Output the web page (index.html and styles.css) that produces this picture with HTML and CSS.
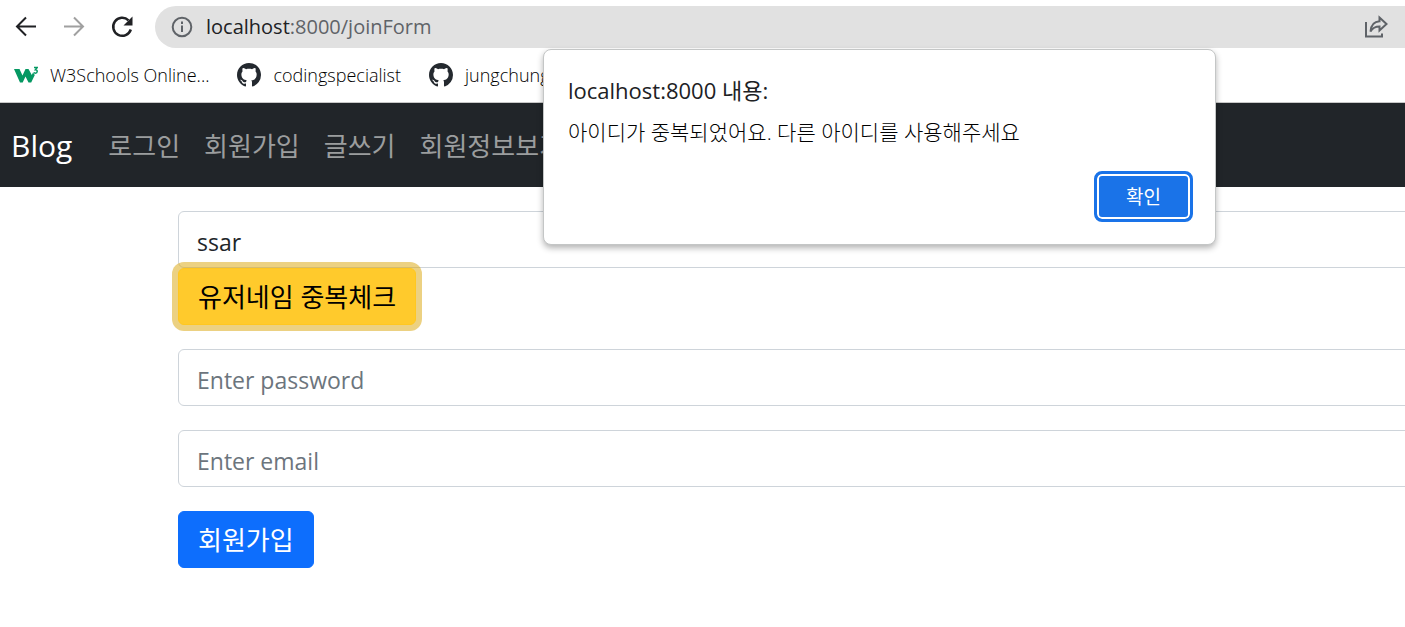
FILE: index.html
```
<!DOCTYPE html>
<html lang="ko">
<head>
<meta charset="utf-8">
<title>Blog</title>
<link rel="stylesheet" href="styles.css">
</head>
<body>
<svg class="sprite" aria-hidden="true">
  <symbol id="github" viewBox="0 0 16 16"><path d="M8 0C3.58 0 0 3.58 0 8c0 3.54 2.29 6.53 5.47 7.59.4.07.55-.17.55-.38 0-.19-.01-.82-.01-1.49-2.01.37-2.53-.49-2.69-.94-.09-.23-.48-.94-.82-1.13-.28-.15-.68-.52-.01-.53.63-.01 1.08.58 1.23.82.72 1.21 1.87.87 2.33.66.07-.52.28-.87.51-1.07-1.78-.2-3.64-.89-3.64-3.95 0-.87.31-1.59.82-2.15-.08-.2-.36-1.02.08-2.12 0 0 .67-.21 2.2.82.64-.18 1.32-.27 2-.27s1.36.09 2 .27c1.53-1.04 2.2-.82 2.2-.82.44 1.1.16 1.92.08 2.12.51.56.82 1.27.82 2.15 0 3.07-1.87 3.75-3.65 3.95.29.25.54.73.54 1.48 0 1.07-.01 1.93-.01 2.2 0 .21.15.46.55.38A8.01 8.01 0 0 0 16 8c0-4.42-3.58-8-8-8z"/></symbol>
</svg>
<div class="toolbar">
  <button class="tool" aria-label="Back"><svg viewBox="0 0 24 24"><path d="M22 11.500H3.500M12 2.500l-9 9 9 9"/></svg></button>
  <button class="tool tool-off" aria-label="Forward"><svg viewBox="0 0 24 24"><path d="M2 11.500h18.500M12 2.500l9 9-9 9"/></svg></button>
  <button class="tool" aria-label="Reload"><svg viewBox="0 0 24 24"><path class="thick" d="M20.800 14.500A9 9 0 1 1 18.500 5.300"/><path class="solid" d="M22.500 1.500v9h-9z"/></svg></button>
  <div class="address">
    <svg class="info" viewBox="0 0 22 22"><circle cx="11" cy="11" r="9.300"/><path d="M11 9.500v6.500M11 5.500v2.500"/></svg>
    <span class="url"><b>localhost</b>:8000/joinForm</span>
    <button class="share" aria-label="Share"><svg viewBox="0 0 24 24"><path d="M2 7v14.500h16v-3"/><path d="M15.500 2.500l7 6.500-7 6.500v-4C11 11.500 8.500 13 6.500 16.500 7 10.500 10 6.500 15.500 6.200z"/></svg></button>
  </div>
</div>
<nav class="bookmarks" aria-label="Bookmarks">
  <a href="#"><svg class="mark" viewBox="0 0 24 24"><path fill="#059862" d="M0 6h5.500l3 6.500 3-6.500h3l3.300 6 1.200-2.500L20.800 12l-3.600 7.500h-2.700L11.500 13.500 8.700 19.500H6z"/><path fill="none" stroke="#059862" stroke-width="1.500" d="M20 4.500h3.200l-1.800 2.300c2.600 0 2.200 3.400 0 3.400-.8 0-1.300-.3-1.600-.8"/></svg>W3Schools Online...</a>
  <a href="#"><svg class="mark cat"><use href="#github"/></svg>codingspecialist</a>
  <a href="#"><svg class="mark cat"><use href="#github"/></svg>jungchung</a>
</nav>
<header class="navbar">
  <a class="brand" href="#">Blog</a>
  <a href="#">로그인</a>
  <a href="#">회원가입</a>
  <a href="#">글쓰기</a>
  <a href="#">회원정보보기</a>
</header>
<main>
  <form class="join">
    <div class="group">
      <input class="field" type="text" value="ssar" aria-label="Username">
      <button class="btn btn-check" type="button">유저네임 중복체크</button>
    </div>
    <input class="field" type="password" placeholder="Enter password" aria-label="Password">
    <input class="field" type="email" placeholder="Enter email" aria-label="Email">
    <button class="btn btn-join" type="button">회원가입</button>
  </form>
</main>
<div class="alert" role="alertdialog" aria-labelledby="alert-title" aria-describedby="alert-text">
  <h1 id="alert-title">localhost:8000 내용:</h1>
  <p id="alert-text">아이디가 중복되었어요. 다른 아이디를 사용해주세요</p>
  <button class="ok" type="button">확인</button>
</div>
</body>
</html>
```
FILE: styles.css
```
* { box-sizing: border-box; }
body {
  margin: 0;
  overflow-x: hidden;
  background: #fff;
  color: #212529;
  font-family: "Open Sans", "Noto Sans CJK KR", sans-serif;
}
button, input { font-family: inherit; }
a { color: inherit; text-decoration: none; white-space: nowrap; }
.sprite { position: absolute; width: 0; height: 0; }

.toolbar { display: flex; align-items: center; padding: 6px 0 0 14px; }
.tool {
  width: 24px;
  height: 24px;
  margin-right: 24px;
  padding: 0;
  border: 0;
  background: none;
  color: #202124;
}
.tool-off { color: #a0a0a0; }
.tool:nth-of-type(3) { margin-right: 21px; }
.tool svg, .share svg { display: block; width: 24px; height: 24px; fill: none; stroke: currentColor; stroke-width: 2; }
.tool .thick { stroke-width: 2.5; }
.tool .solid { fill: currentColor; stroke: none; }
.address {
  flex: 1;
  display: flex;
  align-items: center;
  height: 42px;
  padding: 0 17px 0 16px;
  border-radius: 21px 0 0 21px;
  background: #e1e1e1;
}
.info { width: 22px; height: 22px; margin-right: 13px; fill: none; stroke: #5f6368; stroke-width: 2; }
.url { flex: 1; color: #5f6368; font-size: 20px; line-height: 28px; }
.url b { color: #202124; font-weight: 400; }
.share { padding: 0; border: 0; background: none; color: #5f6368; }

.bookmarks {
  display: flex;
  gap: 28px;
  height: 55px;
  padding: 0 14px;
  border-bottom: 1px solid #c8c8c8;
  color: #000;
  font-size: 18px;
  font-weight: 300;
}
.bookmarks a { display: flex; align-items: center; gap: 12px; }
.mark { width: 24px; height: 24px; flex: none; }
.cat { fill: #24292f; }

.navbar {
  display: flex;
  align-items: center;
  gap: 24px;
  height: 84px;
  padding: 0 11px;
  background: #212529;
  color: #9b9d9e;
  font-size: 26px;
}
.brand { margin-right: 12px; color: #fff; font-size: 30px; }

.join {
  display: flex;
  flex-direction: column;
  align-items: flex-start;
  gap: 24px;
  margin-right: -24px;
  padding: 24px 0 24px 178px;
}
.group { width: 100%; }
.field {
  display: block;
  width: 100%;
  height: 57px;
  padding: 4px 18px 0;
  border: 1px solid #ced4da;
  border-radius: 6px;
  background: #fff;
  color: #212529;
  font-size: 23px;
}
.field::placeholder { color: #6c757d; opacity: 1; }
.btn {
  display: block;
  height: 57px;
  padding: 0 19px;
  border: 1px solid;
  border-radius: 6px;
  font-size: 26px;
  line-height: 48px;
}
.btn-check {
  position: relative;
  border-color: #ffc720;
  background: #ffca2c;
  color: #000;
  box-shadow: 0 0 0 6px rgba(217, 164, 6, .5);
}
.btn-join { border-color: #0d6efd; background: #0d6efd; color: #fff; }

.alert {
  position: absolute;
  top: 49px;
  left: 543px;
  display: flex;
  flex-direction: column;
  width: 673px;
  padding: 22px 22px 22px 24px;
  border: 1px solid #c4c6c6;
  border-radius: 8px;
  background: #fff;
  color: #202124;
  box-shadow: 0 3px 6px rgba(0, 0, 0, .3);
}
.alert h1 { margin: 0; font-size: 22px; font-weight: 400; line-height: 36px; }
.alert p { margin: 5px 0 20px; color: #000; font-size: 21px; font-weight: 300; line-height: 38px; }
.ok {
  align-self: flex-end;
  width: 99px;
  height: 51px;
  padding: 0 0 2px;
  border: 3px solid #1a73e8;
  border-radius: 8px;
  background: #1a73e8;
  color: #fff;
  box-shadow: inset 0 0 0 2px #fff;
  font-size: 19px;
}
```
